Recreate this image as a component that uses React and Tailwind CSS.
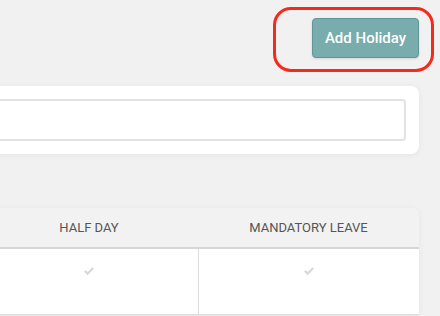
function CheckMark() {
  return (
    <svg width="12" height="9" viewBox="0 0 12 9" className="text-[#d9d9d9]">
      <path d="M1 4.6 L2.6 3 L4.6 5 L9.4 0.2 L11 1.8 L4.6 8.2 Z" fill="currentColor" />
    </svg>
  );
}

export default function App() {
  return (
    <div className="relative w-[440px] h-[316px] overflow-hidden bg-[#f1f1f1] font-['Roboto',sans-serif]">
      <div className="ml-[-20px] pr-[21px]">
        {/* Toolbar */}
        <div className="flex justify-end pt-[18px]">
          <button className="h-[40px] w-[107px] rounded-[4px] border border-[#5f9799] bg-[#78acad] text-white text-[15px] font-medium shadow-sm">
            Add Holiday
          </button>
        </div>

        {/* Search card */}
        <div className="mt-[28px] rounded-[8px] bg-white py-[13px] pr-[13px] shadow-[0_1px_6px_rgba(0,0,0,0.06)]">
          <div className="h-[42px] rounded-[4px] border-2 border-[#e2e2e2] bg-white" />
        </div>

        {/* Table */}
        <div className="mt-[54px] rounded-t-[8px] bg-white shadow-[0_1px_6px_rgba(0,0,0,0.06)]">
          <div className="flex h-[39px] items-center rounded-t-[8px] bg-[#f2f2f2] text-[13px] text-[#555] border-b-2 border-[#d6d6d6] box-content">
            <div className="flex h-full flex-1 items-center justify-center">HALF DAY</div>
            <div className="flex h-full w-[221px] items-center justify-center">MANDATORY LEAVE</div>
          </div>
          <div className="flex h-[66px] border-b border-[#dcdcdc]">
            <div className="flex flex-1 justify-center pt-[18px] border-r border-[#dcdcdc]">
              <CheckMark />
            </div>
            <div className="flex w-[220px] justify-center pt-[18px]">
              <CheckMark />
            </div>
          </div>
        </div>
      </div>

      {/* Highlight outline */}
      <div className="absolute left-[273px] top-[7px] h-[65px] w-[161px] rounded-[18px] border-[3px] border-[#f52a1c]" />
    </div>
  );
}
